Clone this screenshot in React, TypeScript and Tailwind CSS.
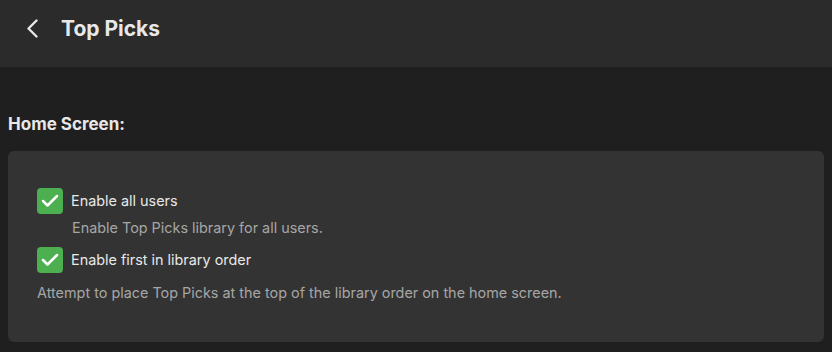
import React from "react";

function Check() {
  return (
    <div className="w-[26px] h-[26px] rounded-[4px] bg-[#4caf50] shrink-0">
      <svg width="26" height="26" viewBox="0 0 26 26" fill="none" stroke="#ffffff" strokeWidth="2.5" strokeLinecap="round" strokeLinejoin="round">
        <path d="M6 13L10.5 17.5L20 8" />
      </svg>
    </div>
  );
}

export default function App() {
  return (
    <div className="w-[832px] h-[352px] bg-[#1f1f1f] text-[#e8e8e8] overflow-hidden" style={{ fontFamily: "Inter, 'Noto Sans', sans-serif" }}>
      <div className="h-[67px] bg-[#2b2b2b]">
        <div className="h-[56px] flex items-center">
          <div className="w-[61px] flex items-center pl-[26px]">
            <svg width="13" height="19" viewBox="0 0 13 19" fill="none" stroke="#e8e8e8" strokeWidth="2.4" strokeLinecap="round" strokeLinejoin="round">
              <path d="M10.5 1.5L2.5 9.5L10.5 17.5" />
            </svg>
          </div>
          <div className="text-[21px] font-bold leading-none">Top Picks</div>
        </div>
      </div>
      <div className="px-[8px] pt-[49px]">
        <div className="text-[17px] font-bold leading-none mb-[18px]">Home Screen:</div>
        <div className="bg-[#333333] rounded-[6px] h-[191px] pl-[29px] pt-[37px] text-[14.4px]">
          <div className="flex items-center gap-[8px]">
            <Check />
            <div className="text-[#e8e8e8]">Enable all users</div>
          </div>
          <div className="text-[#a6a6a6] pl-[35px] mt-[3px] leading-[22px]">Enable Top Picks library for all users.</div>
          <div className="flex items-center gap-[8px] mt-[8px]">
            <Check />
            <div className="text-[#e8e8e8]">Enable first in library order</div>
          </div>
          <div className="text-[#a6a6a6] mt-[9px] leading-[22px]">Attempt to place Top Picks at the top of the library order on the home screen.</div>
        </div>
      </div>
    </div>
  );
}
